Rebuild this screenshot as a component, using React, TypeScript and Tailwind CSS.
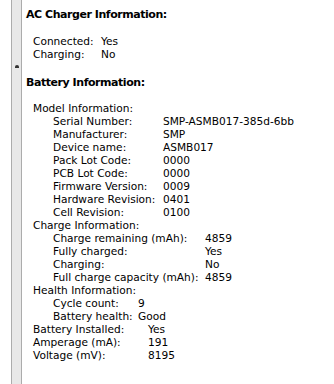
import React from "react";

type Row = [string, string];

const font = { fontFamily: '"DejaVu Sans", Verdana, sans-serif' };

function Table({ rows, labelW, pl }: { rows: Row[]; labelW: string; pl: string }) {
  return (
    <div className={pl}>
      {rows.map(([l, v]) => (
        <div key={l} className="flex h-[13px] leading-[13px] whitespace-nowrap">
          <div className={`${labelW} shrink-0`}>{l}</div>
          <div>{v}</div>
        </div>
      ))}
    </div>
  );
}

export default function App() {
  return (
    <div className="flex h-[384px] w-[334px] bg-white text-black text-[10.6px] overflow-hidden" style={font}>
      <div className="w-[11px] shrink-0 bg-white" />
      <div className="w-[11px] shrink-0 bg-[#e8e8e8] border-l border-r border-[#acacac] flex flex-col items-center pt-[65px]">
        <div className="w-[4px] h-[3px] bg-[#333] rounded-t-[2px]" />
      </div>
      <div className="flex-1 pt-[8px]">
        <div className="pl-[4px] h-[13px] leading-[13px] text-[11px] font-bold tracking-[-0.45px]">AC Charger Information:</div>
        <div className="mt-[14px]">
          <Table
            pl="pl-[11px]"
            labelW="w-[68px]"
            rows={[
              ["Connected:", "Yes"],
              ["Charging:", "No"],
            ]}
          />
        </div>
        <div className="mt-[15px] pl-[4px] h-[13px] leading-[13px] text-[11px] font-bold tracking-[-0.45px]">Battery Information:</div>
        <div className="mt-[13px]">
          <div className="pl-[11px] h-[13px] leading-[13px]">Model Information:</div>
          <Table
            pl="pl-[31px]"
            labelW="w-[110px]"
            rows={[
              ["Serial Number:", "SMP-ASMB017-385d-6bb"],
              ["Manufacturer:", "SMP"],
              ["Device name:", "ASMB017"],
              ["Pack Lot Code:", "0000"],
              ["PCB Lot Code:", "0000"],
              ["Firmware Version:", "0009"],
              ["Hardware Revision:", "0401"],
              ["Cell Revision:", "0100"],
            ]}
          />
          <div className="pl-[11px] h-[13px] leading-[13px]">Charge Information:</div>
          <Table
            pl="pl-[31px]"
            labelW="w-[152px]"
            rows={[
              ["Charge remaining (mAh):", "4859"],
              ["Fully charged:", "Yes"],
              ["Charging:", "No"],
              ["Full charge capacity (mAh):", "4859"],
            ]}
          />
          <div className="pl-[11px] h-[13px] leading-[13px]">Health Information:</div>
          <Table
            pl="pl-[31px]"
            labelW="w-[85px]"
            rows={[
              ["Cycle count:", "9"],
              ["Battery health:", "Good"],
            ]}
          />
          <Table
            pl="pl-[11px]"
            labelW="w-[115px]"
            rows={[
              ["Battery Installed:", "Yes"],
              ["Amperage (mA):", "191"],
              ["Voltage (mV):", "8195"],
            ]}
          />
        </div>
      </div>
    </div>
  );
}
